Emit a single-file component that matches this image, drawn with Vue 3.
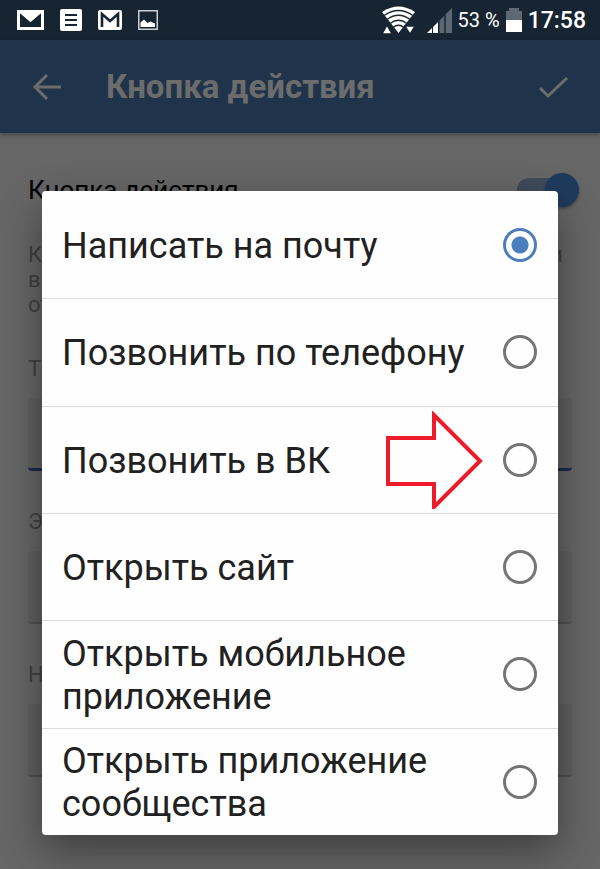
<template>
  <div class="screen">
    <div class="status-bar">
      <div class="status-group notifications">
        <svg width="27" height="20" viewBox="0 0 27 20">
          <rect width="27" height="20" fill="#fff" />
          <path d="M3 3v14h21V3l-10.500 9z" fill="#172432" />
          <path d="M3 3l10.500 9L24 3z" fill="#fff" />
        </svg>
        <svg width="22" height="22" viewBox="0 0 22 22">
          <rect width="22" height="22" rx="2" fill="#fff" />
          <path d="M5 6h12M5 11h12M5 16h12" stroke="#172432" stroke-width="2" />
        </svg>
        <svg width="24" height="20" viewBox="0 0 24 20">
          <rect width="24" height="20" rx="2" fill="#fff" />
          <path d="M4 17V4l8 7 8-7v13" fill="none" stroke="#172432" stroke-width="2.600" />
        </svg>
        <svg width="20" height="20" viewBox="0 0 20 20">
          <rect x="0.750" y="0.750" width="18.500" height="18.500" fill="none" stroke="#cdd1d5" stroke-width="1.500" />
          <path d="M2.500 17v-4.500l3.500-3 3.500 3.500 3-1.500 2 1 2.500 1V17z" fill="#fff" />
        </svg>
      </div>
      <div class="status-group system">
        <svg width="33" height="28" viewBox="0 0 33 28">
          <path d="M0 6Q16.500-5 33 6L16.500 27z" fill="#fff" />
          <path d="M2 9.500Q16.500-.5 31 9.500M5 13.500Q16.500 5 28 13.500M8 17.500Q16.500 11 25 17.500M11 21.500Q16.500 17 22 21.500" fill="none" stroke="#172432" stroke-width="1.300" />
          <path d="M0 28L5 19l5 9zM23 20h10l-5 8z" fill="#fff" stroke="#172432" stroke-width="1.400" />
        </svg>
        <svg class="signal" width="25" height="25" viewBox="0 0 25 25">
          <path d="M12 13l5.500-5.500V25H12zM18.500 6.500L25 0v25h-6.500z" fill="#5d6875" />
          <path d="M0 25l5-5v5zM6 19l5-5v11H6z" fill="#fff" />
          <path d="M12 13v12M18 7v18M5.500 19v6" stroke="#172432" />
        </svg>
        <span class="percent">53 %</span>
        <svg width="16" height="24" viewBox="0 0 16 24">
          <path d="M0 3h3V0h10v3h3v9H0z" fill="#5d6875" />
          <path d="M0 12h16v12H0z" fill="#fff" />
        </svg>
        <span class="clock">17:58</span>
      </div>
    </div>

    <header class="app-bar">
      <button class="icon-button" type="button" aria-label="Назад">
        <svg width="30" height="28" viewBox="0 0 30 28">
          <path d="M29 14H4M15 2L3 14l12 12" fill="none" stroke="currentColor" stroke-width="3" />
        </svg>
      </button>
      <h1>Кнопка действия</h1>
      <button class="icon-button" type="button" aria-label="Готово">
        <svg width="30" height="24" viewBox="0 0 30 24">
          <path d="M2 13l8 8L29 3" fill="none" stroke="currentColor" stroke-width="3" />
        </svg>
      </button>
    </header>

    <main class="settings">
      <label class="switch-row">
        <span>Кнопка действия</span>
        <input v-model="enabled" class="switch" type="checkbox" />
      </label>
      <div class="description">
        <p><span>К</span><span>и</span></p>
        <p>вы</p>
        <p>от</p>
      </div>
      <div v-for="field in fields" :key="field.id" class="field">
        <label :for="field.id">{{ field.label }}</label>
        <input :id="field.id" type="text" :class="{ active: field.active }" />
      </div>
    </main>

    <div class="overlay">
      <div class="dialog" role="dialog" aria-label="Кнопка действия">
        <label v-for="option in options" :key="option.value" class="option">
          <span class="option-text">{{ option.label }}</span>
          <svg v-if="option.marked" class="arrow" width="98" height="98" viewBox="0 0 98 98">
            <path d="M3 27h46V4l46 46-46 46V73H3z" fill="none" stroke="#ec1c2b" stroke-width="4" />
          </svg>
          <input v-model="selected" type="radio" name="action" :value="option.value" />
        </label>
      </div>
    </div>
  </div>
</template>

<script setup>
import { ref } from 'vue'

const enabled = ref(true)
const selected = ref('mail')

const fields = [
  { id: 'type', label: 'Т', active: true },
  { id: 'email', label: 'Э' },
  { id: 'name', label: 'Н' }
]

const options = [
  { value: 'mail', label: 'Написать на почту' },
  { value: 'phone', label: 'Позвонить по телефону' },
  { value: 'vk', label: 'Позвонить в ВК', marked: true },
  { value: 'site', label: 'Открыть сайт' },
  { value: 'app', label: 'Открыть мобильное приложение' },
  { value: 'community', label: 'Открыть приложение сообщества' }
]
</script>

<style>
body {
  background: #666;
}
</style>

<style scoped>
.screen {
  position: relative;
  min-height: 100vh;
  overflow: hidden;
  background: #666;
  font-family: Roboto, "Liberation Sans", sans-serif;
}

.screen * {
  box-sizing: border-box;
}

svg {
  flex: none;
  display: block;
}

.status-bar {
  display: flex;
  align-items: center;
  justify-content: space-between;
  height: 40px;
  padding: 0 14px 0 17px;
  background: #172432;
  color: #fff;
}

.status-group {
  display: flex;
  align-items: center;
}

.notifications {
  gap: 16px;
}

.system {
  gap: 6px;
}

.signal {
  margin-left: 6px;
}

.percent {
  font-size: 20px;
  white-space: nowrap;
}

.clock {
  font-size: 23px;
  font-weight: 500;
}

.app-bar {
  display: flex;
  align-items: center;
  height: 93px;
  padding: 0 32px;
  background: #1f344a;
  color: #6c6c6c;
  box-shadow: 0 2px 4px rgba(0, 0, 0, 0.3);
}

.app-bar h1 {
  flex: 1;
  margin: 0 0 0 44px;
  font-size: 33px;
  font-weight: 700;
  line-height: 40px;
}

.icon-button {
  padding: 0;
  border: 0;
  background: none;
  color: inherit;
}

.settings {
  padding: 40px 28px 0;
  color: #404040;
}

.switch-row {
  display: flex;
  align-items: center;
  justify-content: space-between;
  height: 34px;
  margin-right: -7px;
  font-size: 26px;
  color: #000;
}

.switch {
  position: relative;
  appearance: none;
  width: 62px;
  height: 24px;
  margin: 0;
  border-radius: 12px;
  background: #3f4b5b;
}

.switch::after {
  content: "";
  position: absolute;
  top: -5px;
  right: 0;
  width: 34px;
  height: 34px;
  border-radius: 50%;
  background: #1f3b5c;
  box-shadow: 0 2px 3px rgba(0, 0, 0, 0.3);
}

.description {
  margin: 35px -7px 0 0;
  font-size: 22px;
  line-height: 25px;
}

.description p {
  display: flex;
  justify-content: space-between;
  margin: 0;
  padding-right: 16px;
}

.field {
  margin-top: 39px;
  font-size: 22px;
  line-height: 26px;
}

.field + .field {
  margin-top: 38px;
}

.field label {
  display: block;
}

.field input {
  display: block;
  width: 100%;
  height: 73px;
  margin-top: 16px;
  padding: 0 16px;
  border: 0;
  border-bottom: 2px solid #505050;
  border-radius: 4px;
  background: #606060;
}

.field input.active {
  border-bottom: 3px solid #1d2b4a;
}

.overlay {
  position: absolute;
  inset: 0;
  padding: 191px 42px 0;
}

.dialog {
  display: grid;
  grid-auto-rows: 1fr;
  min-height: 644px;
  overflow: hidden;
  border-radius: 4px;
  background: #fefefe;
  box-shadow: 0 16px 40px rgba(0, 0, 0, 0.4);
}

.option {
  display: flex;
  align-items: center;
  padding: 0 21px 0 20px;
  font-size: 36px;
  line-height: 43px;
  color: #212121;
}

.option + .option {
  border-top: 1px solid #dcdcdc;
}

.option-text {
  flex: 1;
  padding-top: 3px;
}

.arrow {
  margin-right: 20px;
}

.option input {
  appearance: none;
  flex: none;
  width: 34px;
  height: 34px;
  margin: 0;
  border: 3px solid #757575;
  border-radius: 50%;
}

.option input:checked {
  border-color: #4f7db8;
  background: radial-gradient(circle, #4a7ebf 8px, transparent 9px);
}
</style>
